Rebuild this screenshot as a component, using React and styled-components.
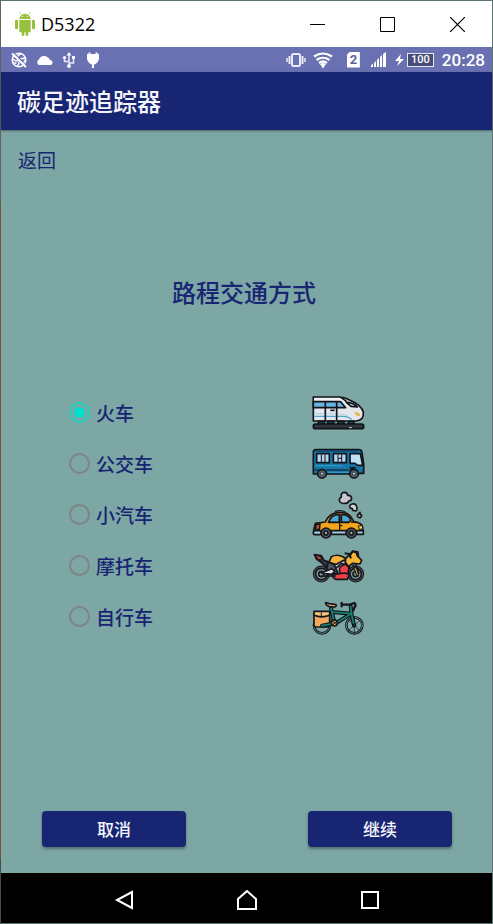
import React, { useState } from "react";
import styled, { createGlobalStyle } from "styled-components";

const navy = "#182573";
const teal = "#7ca7a5";
const cjk = '"Noto Sans CJK SC", sans-serif';

const GlobalStyle = createGlobalStyle`
  * { box-sizing: border-box; }
  body { margin: 0; font-family: Roboto, ${cjk}; }
  button { font: inherit; color: inherit; border: 0; padding: 0; background: none; cursor: pointer; }
  svg { display: block; flex: none; }
`;

const Frame = styled.div`
  min-height: 100vh;
  padding: 1px;
  display: flex;
  flex-direction: column;
  background:
    linear-gradient(#5f6362 22%, #76552a 22%, #76552a 93%, #454d4a 93%) left / 1px 100% no-repeat,
    #5f7472;
`;

const TitleBar = styled.header`
  height: 46px;
  display: flex;
  align-items: center;
  padding-left: 13px;
  background: #fff;
  color: #000;
  font: 18px "Open Sans", sans-serif;
`;

const WindowName = styled.span`
  flex: 1;
  margin-left: 5px;
`;

const WindowButton = styled.button`
  width: 70px;
  height: 46px;
  display: grid;
  place-items: center;
`;

const StatusBar = styled.div`
  height: 25px;
  display: flex;
  align-items: center;
  justify-content: space-between;
  padding: 0 7px 0 9px;
  background: #6971b2;
  color: #fff;
  font-size: 17px;
  font-weight: 500;
`;

const StatusGroup = styled.div`
  display: flex;
  align-items: center;
  gap: ${(p) => p.$gap}px;
`;

const Battery = styled.span`
  width: 27px;
  height: 14px;
  border: 1px solid #e4e6f3;
  background: #474d76;
  font-size: 11px;
  line-height: 12px;
  text-align: center;
`;

const AppBar = styled.div`
  height: 58px;
  display: flex;
  align-items: center;
  padding: 0 16px;
  background: ${navy};
  color: #f4f5fa;
  box-shadow: 0 1px 2px rgba(0, 0, 0, 0.4);
  z-index: 1;
`;

const AppTitle = styled.h1`
  margin: 0;
  font: 500 24px/32px ${cjk};
`;

const Screen = styled.main`
  flex: 1;
  display: flex;
  flex-direction: column;
  background: ${teal};
  color: ${navy};
  font-family: ${cjk};
`;

const BackButton = styled.button`
  align-self: flex-start;
  margin: 16px 17px 0;
  font-size: 19px;
  line-height: 28px;
`;

const Heading = styled.h2`
  margin: 100px 0 77px;
  padding-right: 5px;
  text-align: center;
  font-size: 24px;
  font-weight: 500;
  line-height: 36px;
`;

const Options = styled.div`
  display: flex;
  flex-direction: column;
  padding: 0 126px 0 68px;
`;

const Option = styled.label`
  height: 51px;
  display: flex;
  align-items: center;
  font-size: 19px;
  font-weight: 500;
  cursor: pointer;
`;

const Radio = styled.input`
  appearance: none;
  width: 21px;
  height: 21px;
  margin: 0 6px 0 0;
  border: 2px solid #7f8583;
  border-radius: 50%;
  &:checked {
    padding: 3px;
    border-color: #20d0c0;
    background: #00e0cc content-box;
  }
`;

const OptionName = styled.span`
  flex: 1;
`;

const Actions = styled.div`
  margin-top: auto;
  padding: 40px 40px 26px 41px;
  display: flex;
  justify-content: space-between;
`;

const ActionButton = styled.button`
  width: 144px;
  height: 36px;
  padding-bottom: 2px;
  border-radius: 4px;
  background: ${navy};
  color: #f4f5fa;
  font-size: 17px;
  font-weight: 500;
  box-shadow: 0 2px 3px rgba(0, 0, 0, 0.35);
`;

const NavBar = styled.nav`
  height: 50px;
  padding: 0 61px;
  display: flex;
  justify-content: space-around;
  align-items: center;
  background: #000;
`;

const NavButton = styled.button`
  width: 40px;
  height: 40px;
  display: grid;
  place-items: center;
  padding-top: 4px;
`;

const Robot = () => (
  <svg width="22" height="26" viewBox="42 30 66 78" fill="#97c03d">
    <path d="M58 54a17 16 0 0 1 34 0z" />
    <path d="M63 40l-4-7M87 40l4-7" stroke="#97c03d" strokeWidth="2" />
    <circle cx="67" cy="46" r="2" fill="#fff" /><circle cx="83" cy="46" r="2" fill="#fff" />
    <path d="M58 57h34v34q0 3-3 3h-4v8q0 3-4 3t-4-3v-8h-4v8q0 3-4 3t-4-3v-8h-4q-3 0-3-3z" />
    <rect x="45" y="56" width="9" height="29" rx="4" /><rect x="96" y="56" width="9" height="29" rx="4" />
  </svg>
);

const Globe = () => (
  <svg width="18" height="18" viewBox="0 0 18 18" fill="none" stroke="#fff" strokeWidth="1.500">
    <circle cx="9" cy="9" r="6.800" />
    <path d="M11 2.500Q7 5 7 7M2.500 8Q5 10 8 10M10.500 7.500Q13 8 15.500 6.500M9 11q0 3-2 4.500M12 12.500q2-1 3.500-3.500M3.500 12h3" />
    <path d="M2 2.500l14 13.500" strokeWidth="2" />
    <path d="M4 2l13 12.500" stroke="#6971b2" strokeWidth="1" />
  </svg>
);
const Cloud = () => (
  <svg width="18" height="18" viewBox="0 0 18 18" fill="#fff">
    <path d="M3 14a3 3 0 0 1 0-5.500 5.500 5.500 0 0 1 9-2 4 4 0 0 1 2 2.500 2.600 2.600 0 0 1 1 5z" />
  </svg>
);
const Usb = () => (
  <svg width="14" height="18" viewBox="0 0 14 18" fill="none" stroke="#e8eaf6" strokeWidth="1.500">
    <path d="M7 15V3M2.500 7v3.500H7M7 12h4.500V7" />
    <path d="M7 1l2.500 3.500h-5z" fill="#fff" stroke="none" /><circle cx="7" cy="15" r="1.900" fill="#fff" stroke="none" />
    <circle cx="2.500" cy="6.500" r="1.600" fill="#fff" stroke="none" /><path d="M10 5h3v3h-3z" fill="#fff" stroke="none" />
  </svg>
);
const Plug = styled((props) => (
  <svg width="14" height="18" viewBox="0 0 14 18" fill="#fff" {...props}>
    <path d="M2.500 1.500h2V3h5V1.500h2V3H13v5q-1 4-4.500 5.500H8V17H6v-3.500h-.5Q2 12 1 8V3h1.500z" />
  </svg>
))`
  margin-left: 2px;
`;
const Vibrate = () => (
  <svg width="20" height="18" viewBox="0 0 20 18" fill="none" stroke="#e8eaf6" strokeWidth="2">
    <rect x="6" y="3" width="8" height="12" rx="1.500" /><path d="M3.500 5v8M16.500 5v8" /><path d="M1 7v4M19 7v4" strokeWidth="1.500" />
  </svg>
);
const Wifi = () => (
  <svg width="20" height="18" viewBox="0 0 20 18" fill="none" stroke="#fff" strokeWidth="2.200">
    <path d="M1 5.500Q10-.5 19 5.500M3.500 9q6.500-4.500 13 0" /><path d="M6 12q4-3 8 0" />
    <path d="M7 13q3-2 6 0l-3 4.500z" fill="#fff" stroke="none" />
  </svg>
);
const SimCard = styled.span`
  width: 13px;
  height: 16px;
  margin: 0 11px 0 6px;
  background: #fff;
  color: #5b639f;
  border-radius: 1px;
  clip-path: polygon(25% 0, 100% 0, 100% 100%, 0 100%, 0 20%);
  font-size: 13px;
  font-weight: 700;
  line-height: 16px;
  text-align: center;
`;
const Signal = () => (
  <svg width="16" height="18" viewBox="0 0 16 18" fill="#fff">
    <path d="M0 16v-2l2-1v3zM3 16v-4l2-2v6zM6 16V9l2-2v9zM9 16V6l2-2v12zM12 16V3l3-2v15z" />
  </svg>
);
const Bolt = () => (
  <svg width="9" height="14" viewBox="0 0 9 14" fill="#fff"><path d="M6 1L0 8h4l-2 5 7-7H5z" /></svg>
);

const Train = () => (
  <svg width="54" height="51" viewBox="36 6 162 153" stroke="#101318" strokeWidth="5" strokeLinejoin="round">
    <path d="M40 36h76q18 1 31 8 38 16 43 38 2 24-22 26H40z" fill="#e5e7ed" />
    <path d="M42 39h73l18 9H42z" fill="#f0f0f3" stroke="none" />
    <path d="M40 50h82l15 18H40z" fill="#68b4df" />
    <path d="M139 52q21 0 33 14l-19-2z" fill="#8bcff1" />
    <path d="M43 94h88q16 1 24 9" fill="none" stroke="#4fa7d1" strokeWidth="4" />
    <path d="M43 86h33M82 86h28M113 88h20l12 6" fill="none" stroke="#99c9dd" strokeWidth="2" />
    <path d="M76 50v57M110 50v57M124 38l16 12" fill="none" />
    <path d="M91 76h13" />
    <path d="M165 82l13 4 1 7-10-3z" fill="#f4b83e" stroke="#e5a835" strokeWidth="2" />
    <path d="M55 109h18v7H55zM83 109h18v7H83zM114 109h18v7h-18zM145 109h17v7h-17z" fill="#2b789d" />
    <rect x="40" y="117" width="151" height="14" rx="6" fill="#30353b" />
    <path d="M147 128h9" stroke="#c0cfd2" strokeWidth="3" />
  </svg>
);

const Bus = () => (
  <svg width="54" height="51" viewBox="36 0 162 153" stroke="#10151b" strokeWidth="5" strokeLinejoin="round">
    <path d="M40 108V43q0-8 8-8h128q8 0 10 8l5 35v28h-10l-18 2z" fill="#1877a9" />
    <path d="M46 40h128" stroke="#105078" strokeWidth="4" />
    <path d="M50 47h38v27H50zM100 47h39v27h-39z" fill="#b5d3ed" />
    <path d="M64 49v23M75 49v23M114 49v23M125 49v23M114 61h11" strokeWidth="3" />
    <path d="M150 47h31l7 35h-15l-8-6h-15z" fill="#c0e0f5" />
    <path d="M147 88h20M43 96h14M79 96h69" fill="none" strokeWidth="3" />
    <path d="M45 83h82M84 103h65" stroke="#2e99c7" strokeWidth="4" />
    <path d="M150 94q18-7 21 10" fill="none" />
    <g fill="#59646b"><circle cx="66" cy="107" r="13" /><circle cx="162" cy="107" r="13" /></g>
    <g fill="#b4bec4" strokeWidth="2"><circle cx="66" cy="107" r="5" /><circle cx="162" cy="107" r="5" /></g>
  </svg>
);

const Car = () => (
  <svg width="54" height="51" viewBox="36 12 162 153" stroke="#17171a" strokeWidth="5" strokeLinejoin="round">
    <path d="M120 51q-5-10 4-15-2-13 9-14 9 0 10 9 11-1 12 9 0 8-9 8-2 8-12 7-8 2-14-4z" fill="#c7c8cf" />
    <path d="M150 69q-3-10 7-12 14-2 14 15 0 7-7 5-7 0-7-6z" fill="#d4d5d9" />
    <path d="M174 96q-4-5 1-9l5-5v6q8 1 3 8-5 4-9 0z" fill="#bcc0c4" />
    <path d="M46 144l-5-9 5-20 30-4q11-25 36-28h20q19 3 29 27 25 4 27 17l1 17z" fill="#f5a519" />
    <path d="M86 112q6-20 24-23h8v23zM124 89h9q15 3 20 17l-7 6h-22z" fill="#4aa9d6" />
    <path d="M105 80q16-7 31 1M119 90v47M117 122h10M153 112l17-1M83 112h65" fill="none" strokeWidth="4" />
    <path d="M49 118l11-1-2 17-12-1z" fill="#e65636" />
    <path d="M185 122l-10 1 3 10 9-1" fill="#f9d254" strokeWidth="3" />
    <rect x="40" y="137" width="24" height="12" rx="5" fill="#9fcbdf" />
    <path d="M94 137h45v11H94zM170 137h20v11h-20z" fill="#9fcbdf" />
    <g fill="#4f5660"><circle cx="78" cy="144" r="15" /><circle cx="154" cy="144" r="15" /></g>
    <g fill="#a8aeb5"><circle cx="78" cy="144" r="6" /><circle cx="154" cy="144" r="6" /></g>
  </svg>
);

const Motorcycle = () => (
  <svg width="54" height="51" viewBox="36 -6 162 153" stroke="#17171c" strokeWidth="5" strokeLinejoin="round">
    <g fill="none" strokeWidth="11"><circle cx="64" cy="96" r="20" /><circle cx="167" cy="96" r="20" /></g>
    <g fill="none" stroke="#70787e" strokeWidth="2"><circle cx="64" cy="96" r="21" /><circle cx="167" cy="96" r="21" /></g>
    <circle cx="64" cy="96" r="8" fill="#81979d" /><circle cx="167" cy="96" r="8" fill="#81979d" />
    <path d="M43 38l21 3 8 14 24 8-18 14q-8-13-28-25z" fill="#343844" />
    <path d="M46 39l16 5 3 11-11-4z" fill="#df3c45" strokeWidth="3" />
    <path d="M94 44q18-9 36 1l12 9-21 18-34-11z" fill="#f8b33d" />
    <path d="M84 61l18 6 16 22-13 7-24-15z" fill="#4f536a" />
    <path d="M64 93l31-13 9 7-8 10z" fill="#dddfe6" />
    <path d="M103 70l30-16 16 19-11 25-21 2z" fill="#bfc0ca" />
    <path d="M119 76l17-11 11 12-3 17-18 4-8-10z" fill="#eb4147" />
    <path d="M96 98l39-5 13 5-6 14h-35q-9-4-11-14z" fill="#eb4147" />
    <path d="M137 50l21-22q13 1 13 12l14 15-5 11-23-2-11 10-10-13z" fill="#f7b538" />
    <path d="M134 34l13 2 6 13M148 44l10-16 15 2 2 15" fill="none" strokeWidth="6" />
    <path d="M159 68l12 31M167 66l10 29" fill="none" />
    <path d="M165 78l8 20" stroke="#e8b34a" strokeWidth="3" />
    <path d="M107 79l17-14 11 3M65 102h43" fill="none" />
  </svg>
);

const Bicycle = () => (
  <svg width="54" height="51" viewBox="36 -3 162 153" stroke="#12181b" strokeWidth="5" strokeLinejoin="round" strokeLinecap="round">
    <g fill="none" strokeWidth="8"><circle cx="66" cy="100" r="24" /><circle cx="163" cy="100" r="24" /></g>
    <g fill="none" stroke="#8eafaf" strokeWidth="2"><circle cx="66" cy="100" r="24" /><circle cx="163" cy="100" r="24" /></g>
    <path d="M145 83l35 34M181 83l-36 34M163 75v50" strokeWidth="2" />
    <path d="M42 63h47v37q0 5-7 5H47q-5 0-5-5z" fill="#f1aa5b" />
    <path d="M42 58h47v12q-24 9-47 0z" fill="#fbc07a" />
    <path d="M64 63v10" strokeWidth="3" />
    <path d="M93 48l11 48 50-31 8 35M154 65l-57-5M104 94l-38 7M152 43l3 24" fill="none" strokeWidth="12" />
    <path d="M93 48l11 48 50-31 8 35M154 65l-57-5M104 94l-38 7M152 43l3 24" fill="none" stroke="#168578" strokeWidth="5" />
    <path d="M77 32l11 3 20 3q3 5-4 7l-15-1q-13-4-12-12z" fill="#f3b46d" />
    <path d="M126 38h24l13-5q7 5 0 14l-3 8M125 33v10" fill="none" strokeWidth="7" />
    <circle cx="103" cy="93" r="9" fill="#e2a158" />
    <path d="M95 100l20-14M89 81l16 12" strokeWidth="3" />
    <circle cx="163" cy="100" r="4" fill="#18786d" />
  </svg>
);

const modes = [
  { id: "train", name: "火车", Icon: Train },
  { id: "bus", name: "公交车", Icon: Bus },
  { id: "car", name: "小汽车", Icon: Car },
  { id: "motorcycle", name: "摩托车", Icon: Motorcycle },
  { id: "bicycle", name: "自行车", Icon: Bicycle },
];

export default function App() {
  const [mode, setMode] = useState("train");
  return (
    <>
      <GlobalStyle />
      <Frame>
        <TitleBar>
          <Robot />
          <WindowName>D5322</WindowName>
          <WindowButton aria-label="最小化">
            <svg width="15" height="15" stroke="#000"><path d="M0 7.500h15" /></svg>
          </WindowButton>
          <WindowButton aria-label="最大化">
            <svg width="15" height="15" fill="none" stroke="#000"><path d="M.5.5h14v14H.5z" /></svg>
          </WindowButton>
          <WindowButton aria-label="关闭">
            <svg width="15" height="15" stroke="#000" strokeWidth="1.200"><path d="M0 0l15 15M15 0L0 15" /></svg>
          </WindowButton>
        </TitleBar>
        <StatusBar>
          <StatusGroup $gap={8}><Globe /><Cloud /><Usb /><Plug /></StatusGroup>
          <StatusGroup $gap={8}>
            <StatusGroup $gap={7}><Vibrate /><Wifi /></StatusGroup>
            <StatusGroup $gap={0}><SimCard>2</SimCard><Signal /></StatusGroup>
            <StatusGroup $gap={3}><Bolt /><Battery>100</Battery></StatusGroup>
            <span>20:28</span>
          </StatusGroup>
        </StatusBar>
        <AppBar><AppTitle>碳足迹追踪器</AppTitle></AppBar>
        <Screen>
          <BackButton>返回</BackButton>
          <Heading id="mode-heading">路程交通方式</Heading>
          <Options role="radiogroup" aria-labelledby="mode-heading">
            {modes.map(({ id, name, Icon }) => (
              <Option key={id}>
                <Radio type="radio" name="mode" value={id} checked={mode === id} onChange={() => setMode(id)} />
                <OptionName>{name}</OptionName>
                <Icon />
              </Option>
            ))}
          </Options>
          <Actions>
            <ActionButton>取消</ActionButton>
            <ActionButton>继续</ActionButton>
          </Actions>
        </Screen>
        <NavBar>
          <NavButton aria-label="后退">
            <svg width="20" height="20" fill="none" stroke="#fff" strokeWidth="2"><path d="M18 2v16L3 10z" /></svg>
          </NavButton>
          <NavButton aria-label="主页">
            <svg width="22" height="20" fill="none" stroke="#fff" strokeWidth="2"><path d="M2 19V9l9-8 9 8v10z" /></svg>
          </NavButton>
          <NavButton aria-label="最近任务">
            <svg width="18" height="18" fill="none" stroke="#fff" strokeWidth="2"><path d="M1 1h16v16H1z" /></svg>
          </NavButton>
        </NavBar>
      </Frame>
    </>
  );
}
